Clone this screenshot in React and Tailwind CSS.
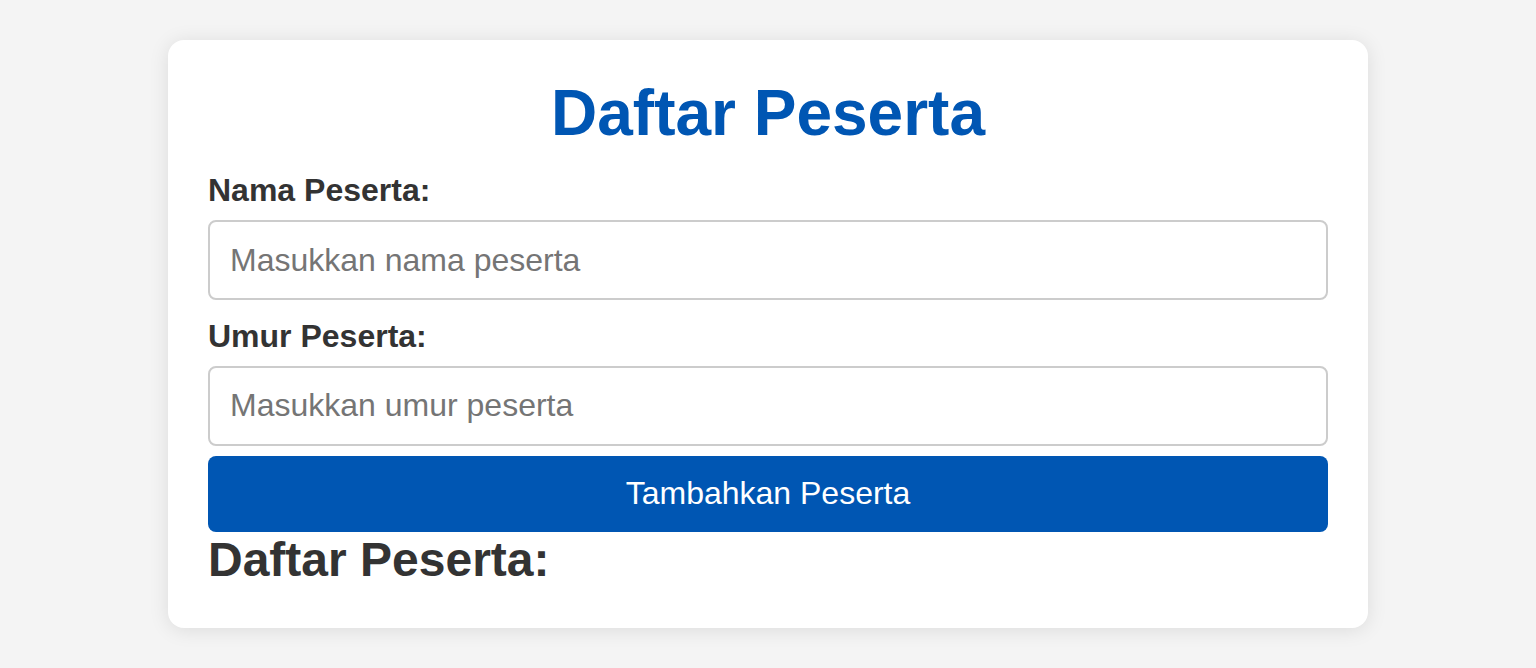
import { useState } from 'react'

export default function App() {
  const [nama, setNama] = useState('')
  const [umur, setUmur] = useState('')
  const [peserta, setPeserta] = useState([])

  const tambah = () => {
    if (!nama || !umur) return
    setPeserta([...peserta, { nama, umur }])
    setNama('')
    setUmur('')
  }

  return (
    <div className="min-h-screen bg-[#f4f4f4] pt-[40px] pb-[40px] font-['Liberation_Sans',Arial,sans-serif] text-[#333]">
      <div className="mx-auto w-[1200px] rounded-[16px] bg-white px-[40px] pt-[37px] pb-[41px] shadow-[0_2px_20px_rgba(0,0,0,0.1)]">
        {/* Judul */}
        <h1 className="mb-[21px] text-center text-[64px] font-bold leading-[1.15] text-[#0056b3]">
          Daftar Peserta
        </h1>

        <label className="mb-[12px] block text-[32px] font-bold leading-[1.15]">Nama Peserta:</label>
        <input
          type="text"
          value={nama}
          onChange={(e) => setNama(e.target.value)}
          placeholder="Masukkan nama peserta"
          className="mb-[18px] block w-full rounded-[8px] border-2 border-[#ccc] px-[20px] py-[19.5px] text-[32px] leading-[1.15] outline-none placeholder:text-[#757575]"
        />

        <label className="mb-[11px] block text-[32px] font-bold leading-[1.15]">Umur Peserta:</label>
        <input
          type="number"
          value={umur}
          onChange={(e) => setUmur(e.target.value)}
          placeholder="Masukkan umur peserta"
          className="mb-[10px] block w-full rounded-[8px] border-2 border-[#ccc] px-[20px] py-[19.5px] text-[32px] leading-[1.15] outline-none placeholder:text-[#757575]"
        />

        <button
          onClick={tambah}
          className="block w-full rounded-[8px] bg-[#0056b3] py-[19.5px] text-[32px] leading-[1.15] text-white"
        >
          Tambahkan Peserta
        </button>

        <h2 className="text-[48px] font-bold leading-[1.15]">Daftar Peserta:</h2>
        {peserta.length > 0 && (
          <ul className="text-[32px]">
            {peserta.map((p, i) => (
              <li key={i}>{p.nama} - {p.umur} tahun</li>
            ))}
          </ul>
        )}
      </div>
    </div>
  )
}
